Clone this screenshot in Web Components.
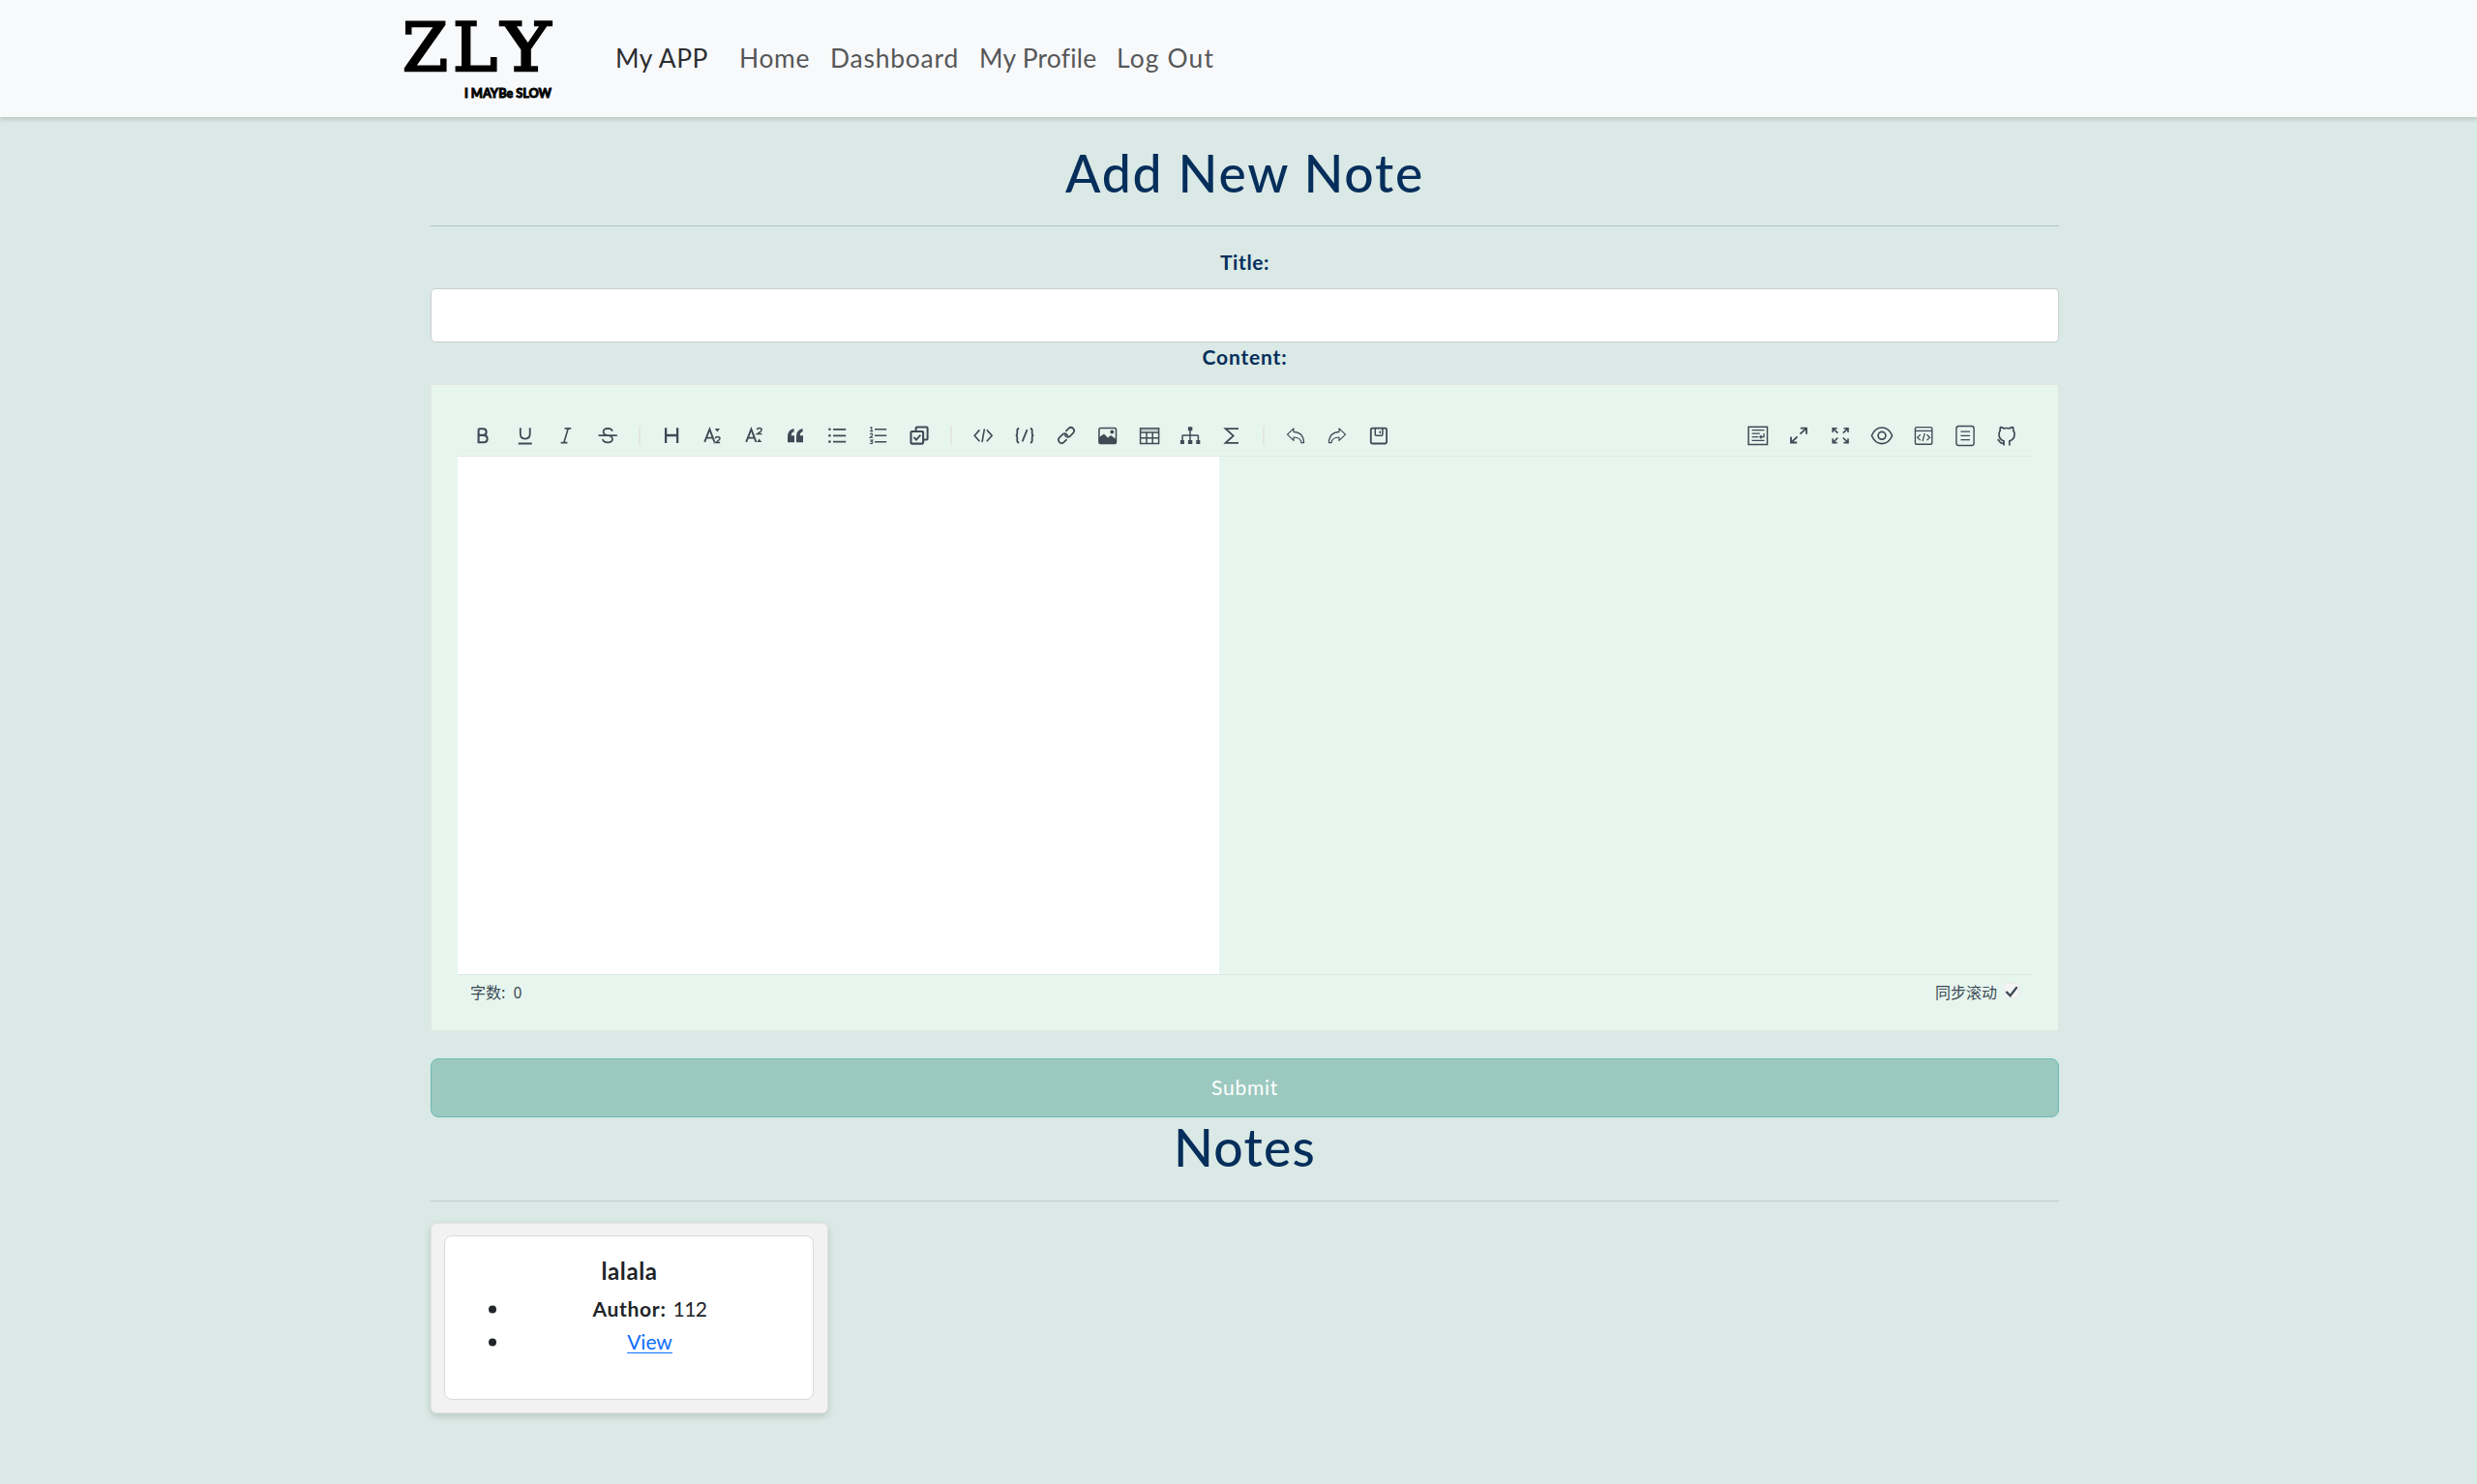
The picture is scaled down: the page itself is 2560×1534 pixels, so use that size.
<!DOCTYPE html>
<html lang="en">
<head>
<meta charset="utf-8">
<title>My APP</title>
<style>
html,body{margin:0;padding:0}
body{background:#dae9e5;min-height:1534px;font-family:Lato,"Noto Sans CJK SC",sans-serif;font-size:21px;color:#212529}
</style>
</head>
<body>
<notes-app></notes-app>
<script>
const define=(name,html,ready)=>customElements.define(name,class extends HTMLElement{
  constructor(){super();this.attachShadow({mode:'open'}).innerHTML=html;}
  connectedCallback(){if(ready)ready(this,this.shadowRoot);}
});

/* Text set to a fixed measure by even tracking. */
define('fit-text',`<style>:host{display:inline-block;white-space:nowrap;text-align:left}</style><slot></slot>`,(el)=>{
  const target=+el.getAttribute('w'),n=el.textContent.length;
  el.style.letterSpacing='0px';
  const w=el.getBoundingClientRect().width;
  el.style.letterSpacing=((target-w)/n)+'px';
  el.style.width=target+'px';
});

const two=(x,y,w,h)=>`<path d="M${x} ${y+h*.28}q.2-${h*.28} ${w*.5}-${h*.28}q${w*.5} 0 ${w*.45} ${h*.3}q-.2 ${h*.25}-${w*.95} ${h*.7}h${w}" stroke-width="1.5"/>`;
const icons={
bold:`<path d="M7.6 5.2V19.2H12.8Q16.6 19.2 16.6 15.5Q16.6 11.9 12.8 11.9H7.6M7.6 5.2H12.3Q15.6 5.2 15.6 8.5Q15.6 11.9 12.3 11.9" stroke-width="2.1"/>`,
underline:`<path d="M7.8 4.3V10.6Q7.8 15.6 12.7 15.6Q17.7 15.6 17.7 10.6V4.3M5.7 20.5H19.7" stroke-width="1.8"/>`,
italic:`<path d="M10.6 4.9H17.2M6.6 19.6H13.4M14.2 4.9L9.8 19.6" stroke-width="1.6"/>`,
strike:`<path d="M17 7.6Q16 4.8 12.2 4.8Q7.6 5 7.6 8.2Q7.6 11.2 12 12Q17 12.9 17 15.8Q17 19.4 12.2 19.4Q7.7 19.4 6.8 16M2.5 12.1H21.8" stroke-width="1.7"/>`,
heading:`<path d="M6.1 4.3V20M18.1 4.3V20M6.1 12H18.1" stroke-width="2.3"/>`,
sub:`<path d="M4.2 18.8L9.4 5.6L14.4 18.8M6 14.6H12.8" stroke-width="1.9"/><path d="M14.8 5h5.2l-2.6 3.4z" fill="currentColor" stroke="none"/>${two(15.4,13.6,4.8,6)}`,
sup:`<path d="M4.2 18.8L9.4 5.6L14.4 18.8M6 14.6H12.8" stroke-width="1.9"/><path d="M15.2 19h5l-2.5-3.6z" fill="currentColor" stroke="none"/>${two(15.6,4.6,4.8,6)}`,
quote:`<path d="M10.6 5Q4 6.400 4 13V19.200H11V12.200H7.800Q7.800 8.600 10.600 8.200ZM19.600 5Q13 6.400 13 13V19.200H20V12.200H16.800Q16.800 8.600 19.600 8.200Z" fill="currentColor" stroke="none"/>`,
ul:`<path d="M8 5.800H21.200M8 12.300H21.200M8 18.600H21.200" stroke-width="1.700"/><g fill="currentColor" stroke="none"><circle cx="4.400" cy="5.800" r="1.300"/><circle cx="4.400" cy="12.300" r="1.300"/><circle cx="4.400" cy="18.600" r="1.300"/></g>`,
ol:`<path d="M8 5.800H20.200M8 12.300H20.200M8 18.800H20.200" stroke-width="1.600"/><path d="M3.400 4.200L4.800 3.600V7.600M3.200 7.600H6.200M3.200 10.800Q4.800 9.600 5.700 10.800Q6 12 3.300 14.200H6.200M3.200 17H5.900L4.500 18.500Q6.400 18.700 5.700 20Q4.600 21 3.100 20.200" stroke-width="1.100"/>`,
task:`<path d="M8.600 7.400V4.600Q8.600 3.600 9.600 3.600H19.600Q20.600 3.600 20.600 4.600V15.400Q20.600 16.400 19.600 16.400H16.800" stroke-width="2"/><rect x="3.500" y="8" width="12.600" height="12.600" rx="1" stroke-width="2.100"/><path d="M6.400 14L9 16.600L13.400 11.600" stroke-width="1.800"/>`,
code:`<path d="M8.400 6.400L3.200 12.300L8.400 18.200M15.800 6.400L21.200 12.300L15.800 18.200M13.400 5.400L11 19" stroke-width="1.600"/>`,
braces:`<path d="M6.200 5Q4.300 5 4.300 7V10Q4.300 12.200 2.700 12.200Q4.300 12.200 4.300 14.400V17.600Q4.300 19.600 6.200 19.600M17.800 5Q19.700 5 19.700 7V10Q19.700 12.200 21.300 12.200Q19.700 12.200 19.700 14.400V17.600Q19.700 19.600 17.800 19.600M14.600 6.200L9.600 18.400" stroke-width="1.800"/>`,
link:`<g transform="rotate(-45 12 12)" stroke-width="1.700"><path d="M9.500 15.300H5.200Q2 15.300 2 12Q2 8.700 5.200 8.700H9.800Q13 8.700 13 12Q13 13 12.500 13.600"/><path d="M14.500 8.700H18.800Q22 8.700 22 12Q22 15.300 18.800 15.300H14.200Q11 15.300 11 12Q11 11 11.500 10.400"/></g>`,
image:`<rect x="2.900" y="4.600" width="17.600" height="16" rx="1.500" stroke-width="1.500"/><path d="M2.900 14L8 10.600L12 14.600L15 12L20.500 16V20.600H2.900Z" fill="currentColor" stroke="none"/><circle cx="16.300" cy="8.500" r="1.900" fill="currentColor" stroke="none"/>`,
table:`<path d="M2.600 4.700H21.600V20.500H2.600ZM2.600 9H21.600M2.600 14.700H21.600M9 9V20.500M15.200 9V20.500" stroke-width="1.500"/><path d="M2.600 6.600H21.600" stroke-width="1" opacity=".45"/>`,
tree:`<path d="M12 5V18M4 17V12.600Q4 12 4.600 12H19.800Q20.400 12 20.400 12.600V17" stroke-width="1.500"/><path d="M9.900 3.200h4.400v4h-4.400zM1.900 17h4v4h-4zM9.900 17h4.400v4h-4.400zM18.300 17h4v4h-4z" fill="currentColor" stroke="none"/>`,
sigma:`<path d="M19 5.200H5.600L13.600 12.400L5.600 19.800H19" stroke-width="1.800"/>`,
undo:`<path d="M3.500 11.200L10 4.900V8.400Q20.400 9.200 20.600 19.600H17.900Q17.600 14.200 10 14V17.400Z" stroke-width="1.150" stroke-linejoin="round"/>`,
redo:`<path d="M20.500 11.200L14 4.900V8.400Q3.600 9.200 3.400 19.600H6.100Q6.400 14.200 14 14V17.400Z" stroke-width="1.150" stroke-linejoin="round"/>`,
save:`<rect x="3.800" y="4.700" width="16.300" height="15.800" rx="1.500" stroke-width="1.800"/><path d="M8.300 5V11.300Q8.300 12.300 9.300 12.300H14.900Q15.900 12.300 15.900 11.300V5M13.300 7.400V9.900" stroke-width="1.500"/>`,
preview:`<rect x="2.100" y="3.300" width="19.400" height="18.200" stroke-width="1.500"/><path d="M5.600 6.600H18.400M5.600 10.200H13.800M5.600 13.700H12.200M5.600 17.400H18.400M18 10V13.700H14M15.600 12L13.800 13.700L15.600 15.400" stroke-width="1.300"/>`,
expand:`<path d="M13.400 10.600L19.800 4.800M13.800 4.700H20V10.800M10.600 13.400L4.200 19.400M4 13.400V19.500H10.200" stroke-width="1.800"/>`,
full:`<path d="M4.400 4.900L9.400 9.700M4.200 9V4.700H8.700M19.800 4.900L14.800 9.700M15.500 4.700H20V9M4.400 19.400L9.400 14.500M4.200 15.200V19.600H8.700M19.800 19.400L14.800 14.500M15.500 19.600H20V15.200" stroke-width="1.600"/>`,
eye:`<path d="M1.400 12.300Q4.800 4 12 4Q19.200 4 22.600 12.300Q19.200 20.600 12 20.600Q4.800 20.600 1.400 12.300Z" stroke-width="1.600"/><circle cx="12" cy="12.300" r="3.900" stroke-width="1.700"/>`,
html:`<rect x="3.400" y="3.600" width="17.400" height="17.600" rx="1.500" stroke-width="1.400"/><path d="M3.400 7.400H20.800" stroke-width="1.300"/><path d="M8.800 11.300L5.600 14.200L8.800 17.100M15.400 11.300L18.600 14.200L15.400 17.100M13.200 10L11 18.200" stroke-width="1.200"/>`,
catalog:`<rect x="2.900" y="2.500" width="18.200" height="20" rx="2.600" stroke-width="1.400"/><path d="M7.400 8.200H17M7.400 12.400H17M7.400 16.700H17" stroke-width="1.300"/>`,
github:`<path d="M9 22.400V17.800Q4 16.600 4 10.800Q4 8.600 5.200 7.200Q4.800 5.200 5.500 3.600Q7.300 3.600 8.800 4.800Q12 4.200 15 4.800Q16.600 3.600 18.400 3.600Q19.100 5.400 18.700 7.200Q20 8.600 20 10.800Q20 16.600 14.800 17.800V22.400M9 20.200Q5.800 20.800 4.600 18.400Q3.800 16.600 2.400 16.400" stroke-width="1.700" stroke-linejoin="round"/>`
};
define('tool-icon',`<style>:host{display:flex;width:42.84px;height:24px;justify-content:center;color:#3f4a55}svg{width:24px;height:24px;display:block;overflow:visible}</style><svg viewBox="0 0 24 24" fill="none" stroke="currentColor"></svg>`,
(el,r)=>{r.querySelector('svg').innerHTML=icons[el.getAttribute('name')];});
define('tool-divider',`<style>:host{display:block;width:2px;height:20px;margin:0 10.500px;background:#e4e6e3}</style>`);

define('brand-logo',`<style>:host{display:block;width:154px;height:84px}svg{display:block;overflow:visible}</style>
<svg width="154" height="84" viewBox="417 20 154 84" fill="#000"><g font-family="DejaVu Serif" font-size="68.500" stroke="#000" stroke-width="2.500">
<text x="416" y="73.300" textLength="47" lengthAdjust="spacingAndGlyphs">Z</text><text x="468" y="73.300" textLength="46" lengthAdjust="spacingAndGlyphs">L</text><text x="518" y="73.300" textLength="51" lengthAdjust="spacingAndGlyphs">Y</text></g>
<text x="480" y="100.500" font-family="Lato" font-weight="900" font-size="13.500" stroke="#000" stroke-width=".9" textLength="90" lengthAdjust="spacingAndGlyphs">I MAYBe SLOW</text></svg>`);

define('site-nav',`<style>
:host{display:flex;height:121px;box-sizing:border-box;padding-left:417px;background:#f8f9fb;box-shadow:0 2px 5px rgba(0,0,0,.17);position:relative;font-size:26.400px;color:#565758}
brand-logo{margin-top:20px}
nav{display:flex;align-items:center;gap:21px;margin-left:65px;padding-bottom:2px}
.brand{color:#2c2e30;margin-right:11px}</style>
<brand-logo></brand-logo><nav><fit-text class="brand" w="96">My APP</fit-text><fit-text w="73">Home</fit-text><fit-text w="133">Dashboard</fit-text><fit-text w="121">My Profile</fit-text><fit-text w="101">Log Out</fit-text></nav>`);

define('section-title',`<style>:host{display:block;text-align:center;color:#052e5b;font-size:53.500px;line-height:58px}
h1{font:inherit;font-weight:500;margin:0}hr{height:1px;border:0;margin:var(--gap,26px) 0 0;background:var(--rule,#b1c3c7)}</style><h1><slot></slot></h1><hr>`);
define('field-label',`<style>:host{display:block;height:30px;line-height:30px;text-align:center;color:#052e5b;font-weight:700}</style><slot></slot>`);

define('md-editor',`<style>
:host{display:flex;flex-direction:column;box-sizing:border-box;height:669px;border:1px solid #e1e6e3;background:#e6f6ee;padding:28px 27px 20px;color:#3f4a55}
.bar{flex:none;display:flex;justify-content:space-between;align-items:center;box-sizing:border-box;height:46px;padding:2px 5px 0 4.800px;border-bottom:1px solid #dfe9e5}
.bar div{display:flex;align-items:center}
.body{flex:none;height:535px;display:flex}.input{width:787px;background:#fff}
footer{flex:none;box-sizing:border-box;display:flex;justify-content:space-between;align-items:center;height:34px;border-top:1px solid #dfe6e2;padding:0 13px 0 13px;font:16px/20px "Noto Sans CJK SC",sans-serif}
.sync{display:flex;align-items:center;gap:7px}.count{display:flex;gap:8px}
svg{display:block;width:16px;height:16px;margin-top:-2px}</style>
<div class="bar"><div class="l"></div><div class="r"></div></div>
<div class="body"><div class="input"></div></div>
<footer><span class="count"><span>字数:</span><span>0</span></span><span class="sync">同步滚动<svg viewBox="0 0 16 16"><rect x=".5" y=".5" width="15" height="15" rx="2.500" fill="#f4f4f4" stroke="#ebebea"/><path d="M3 9.600L6.600 13.200L13 5" fill="none" stroke="#3f4a55" stroke-width="2.300" stroke-linecap="round"/></svg></span></footer>`,(el,r)=>{
const build=s=>s.split(' ').map(n=>n==='|'?'<tool-divider></tool-divider>':`<tool-icon name="${n}"></tool-icon>`).join('');
r.querySelector('.l').innerHTML=build('bold underline italic strike | heading sub sup quote ul ol task | code braces link image table tree sigma | undo redo save');
r.querySelector('.r').innerHTML=build('preview expand full eye html catalog github');});

define('note-card',`<style>
:host{display:block;box-sizing:border-box;width:411px;height:197px;margin:22px 0 0;padding:12px 12px 12px 13px;border:1px solid #e2e3e2;border-radius:6px;background:#f2f2f2;box-shadow:0 3px 7px rgba(0,0,0,.15)}
article{box-sizing:border-box;width:382px;height:170px;border:1px solid #d9dadb;border-radius:8px;background:#fff;padding:21px 0 0 1px;text-align:center}
h5{margin:0;font-size:24px;line-height:30px;font-weight:700}
ul{margin:7px 22px 0 62px;padding:0;list-style:none}
li{display:flex;align-items:center;height:34px;line-height:34px}
li::before{content:"";width:8px;height:8px;border-radius:50%;background:#212529;margin-left:-18px;margin-right:12px;flex:none;transform:translateY(.5px)}
li>div{flex:1;display:flex;justify-content:center;gap:7px}
b{font-weight:700}a{color:#0d6efd;text-decoration:underline;text-decoration-thickness:1px;text-underline-offset:3px}</style>
<article><h5><fit-text w="58">lalala</fit-text></h5><ul><li><div><b><fit-text w="76">Author:</fit-text></b><fit-text w="35">112</fit-text></div></li><li><div><a href="#"><slot name="link">View</slot></a></div></li></ul></article>`);

define('notes-app',`<style>
:host{display:block}main{width:1683px;margin-left:445px;padding-top:28px}
.title{margin-top:22px}
input{display:block;width:100%;height:56px;box-sizing:border-box;margin-top:12px;border:1px solid #c9cecf;border-radius:5px;background:#fff;outline:0}
md-editor{margin-top:13px}
button{display:block;width:100%;height:61px;margin-top:28px;box-sizing:border-box;border:1px solid #69bbb4;border-radius:8px;background:#9bc9bf;color:#fff;font:21px Lato,sans-serif;padding:0 0 2px}
.notes{--rule:#bacccd;--gap:27px;margin-top:1px}</style>
<site-nav></site-nav><main>
<section-title><fit-text w="371">Add New Note</fit-text></section-title>
<field-label class="title"><fit-text w="51">Title:</fit-text></field-label><input aria-label="Title">
<field-label><fit-text w="88">Content:</fit-text></field-label>
<md-editor></md-editor>
<button><fit-text w="69">Submit</fit-text></button>
<section-title class="notes"><fit-text w="147">Notes</fit-text></section-title>
<note-card></note-card></main>`);
</script>
</body>
</html>
